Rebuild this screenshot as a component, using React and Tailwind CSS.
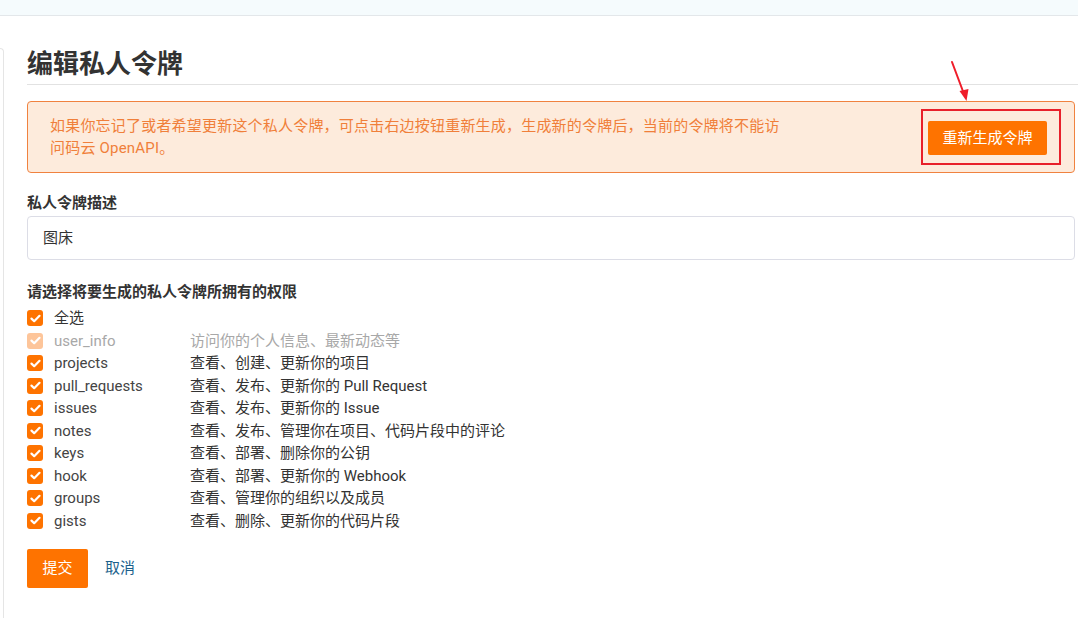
import React from 'react';

const perms = [
  { name: 'user_info', desc: '访问你的个人信息、最新动态等', disabled: true },
  { name: 'projects', desc: '查看、创建、更新你的项目' },
  { name: 'pull_requests', desc: '查看、发布、更新你的 Pull Request' },
  { name: 'issues', desc: '查看、发布、更新你的 Issue' },
  { name: 'notes', desc: '查看、发布、管理你在项目、代码片段中的评论' },
  { name: 'keys', desc: '查看、部署、删除你的公钥' },
  { name: 'hook', desc: '查看、部署、更新你的 Webhook' },
  { name: 'groups', desc: '查看、管理你的组织以及成员' },
  { name: 'gists', desc: '查看、删除、更新你的代码片段' },
];

const font = { fontFamily: 'Roboto, "Noto Sans CJK SC", sans-serif' };

const Check = ({ disabled }) => (
  <span
    className={`w-4 h-4 rounded-[3px] flex items-center justify-center shrink-0 ${
      disabled ? 'bg-[#fdc59a]' : 'bg-[#fe7300]'
    }`}
  >
    <svg width="11" height="9" viewBox="0 0 11 9">
      <path d="M1.5 4.6 L4.2 7.2 L9.5 1.8" fill="none" stroke="#fff" strokeWidth="2.2" strokeLinecap="round" strokeLinejoin="round" />
    </svg>
  </span>
);

export default function App() {
  return (
    <div className="w-[1078px] h-[618px] bg-white overflow-hidden text-[15px] text-[#333]" style={font}>
      {/* top strip */}
      <div className="h-4 bg-[#f5fbfd] border-b border-[#e3e7ea]" />

      <div className="flex mt-8">
        {/* left panel edge */}
        <div className="w-[4px] h-[600px] border-t border-r border-[#e5e5e5] rounded-tr-[5px] shrink-0" />

        <div className="flex-1 pl-[23px] pr-[3px]">
          <div className="border-b border-[#e2e2e2] pb-[3px] -mr-[3px]">
            <h1 className="text-[26px] font-bold leading-[33px] text-[#333]">编辑私人令牌</h1>
          </div>

          {/* notice */}
          <div className="relative mt-[16px] h-[72px] bg-[#fdebdc] border border-[#f0823f] rounded-[4px] flex items-center pl-[22px] pr-[27px]">
            <div className="flex-1">
              <p className="w-[736px] text-[#f07f3a] leading-[22px] tracking-[0.2px]">
                如果你忘记了或者希望更新这个私人令牌，可点击右边按钮重新生成，生成新的令牌后，当前的令牌将不能访问码云 OpenAPI。
              </p>
            </div>
            <div className="border-2 border-[#e8202a] pl-[5px] pr-[12px] pt-[10px] pb-[8px] mr-[-14px]">
              <button className="h-[34px] w-[119px] bg-[#fe7300] text-white rounded-[2px] text-[15px]">重新生成令牌</button>
            </div>
            {/* annotation arrow */}
            <svg className="absolute left-[918px] top-[-42px]" width="30" height="44" viewBox="0 0 30 44">
              <line x1="6" y1="2" x2="18" y2="34" stroke="#ef1d2a" strokeWidth="2" strokeLinecap="round" />
              <path d="M13.5 31 L20.5 41 L22.5 29 Z" fill="#ef1d2a" />
            </svg>
          </div>

          <div className="mt-[20px] font-bold leading-[20px]">私人令牌描述</div>
          <div className="mt-[3px] h-[44px] border border-[#dcdde6] rounded-[4px] flex items-center pl-[15px]">
            图床
          </div>

          <div className="mt-[22px] font-bold leading-[20px]">请选择将要生成的私人令牌所拥有的权限</div>
          <div className="mt-[5px]">
            <div className="flex items-center h-[22.5px]">
              <Check />
              <span className="ml-[11px]">全选</span>
            </div>
            {perms.map((p) => (
              <div key={p.name} className="flex items-center h-[22.5px]">
                <Check disabled={p.disabled} />
                <span className={`ml-[11px] w-[136px] ${p.disabled ? 'text-[#a8a8a8]' : 'text-[#444]'}`}>{p.name}</span>
                <span className={p.disabled ? 'text-[#a8a8a8]' : 'text-[#333]'}>{p.desc}</span>
              </div>
            ))}
          </div>

          <div className="mt-[17px] flex items-center">
            <button className="h-[39px] w-[61px] bg-[#fe7300] text-white rounded-[2px]">提交</button>
            <span className="ml-[17px] text-[#1d5f8c]">取消</span>
          </div>
        </div>
      </div>
    </div>
  );
}
